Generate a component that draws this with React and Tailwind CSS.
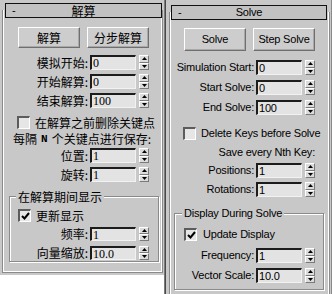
import React from 'react';

const cjk = "font-['Noto_Sans_CJK_SC',sans-serif]";
const sans = "font-['Liberation_Sans',Arial,sans-serif]";
const serifNum = "font-['Liberation_Serif','Noto_Sans_CJK_SC',serif]";

function TitleBar({ text, className, font }) {
  return (
    <div className={`relative z-10 grid grid-cols-[20px_1fr_20px] items-center border border-[#111] bg-[#c2c2c2] leading-none ${className}`}>
      <span className={`pl-[6px] text-[11px] ${sans}`}>-</span>
      <span className={`text-center ${font}`}>{text}</span>
      <span />
    </div>
  );
}

function Button({ children, className }) {
  return (
    <div className={`flex w-[62px] items-center justify-center border border-t-white border-l-white border-r-[#6f6f6f] border-b-[#6f6f6f] bg-[#cdcdcd] shadow-[inset_-1px_-1px_0_#a8a8a8] leading-none ${className}`}>
      {children}
    </div>
  );
}

function Spinner({ className }) {
  return (
    <div className={`ml-[3px] flex w-[10px] flex-col ${className}`}>
      <div className="flex flex-1 items-center justify-center border border-t-white border-l-white border-r-[#7a7a7a] border-b-[#7a7a7a] bg-[#dcdcdc]">
        <svg width="5" height="3" viewBox="0 0 5 3"><path d="M2.5 0L5 3H0z" fill="#000" /></svg>
      </div>
      <div className="flex flex-1 items-center justify-center border border-t-white border-l-white border-r-[#7a7a7a] border-b-[#7a7a7a] bg-[#dcdcdc]">
        <svg width="5" height="3" viewBox="0 0 5 3"><path d="M0 0H5L2.5 3z" fill="#000" /></svg>
      </div>
    </div>
  );
}

function Field({ value, className, font }) {
  return (
    <div className={`flex w-[46px] items-center overflow-hidden border-t-2 border-l-2 border-r border-b border-t-[#1c1c1c] border-l-[#1c1c1c] border-r-[#f2f2f2] border-b-[#f2f2f2] bg-[#e3e3e3] pl-[1px] leading-none ${font} ${className}`}>
      {value}
    </div>
  );
}

function Row({ label, value, labelW, h, labelFont, valueFont }) {
  return (
    <div className={`flex items-center ${h}`}>
      <span className={`pr-[2px] text-right leading-none whitespace-nowrap ${labelW} ${labelFont}`}>{label}</span>
      <Field value={value} className={h} font={valueFont} />
      <Spinner className={h} />
    </div>
  );
}

function Check({ checked }) {
  return (
    <div className="flex h-[13px] w-[13px] shrink-0 items-center justify-center border-t-2 border-l-2 border-r border-b border-t-[#5c5c5c] border-l-[#5c5c5c] border-r-white border-b-white bg-[#e6e6e6]">
      {checked && (
        <svg width="9" height="8" viewBox="0 0 9 8">
          <path d="M1 4L3.5 6.5L8 1" fill="none" stroke="#000" strokeWidth="2" />
        </svg>
      )}
    </div>
  );
}

function LeftPanel() {
  const num = `text-[12px] ${serifNum}`;
  const lab = `text-[12px] ${cjk}`;
  return (
    <div className="h-[275px] w-[164px] shrink-0 bg-[#c8c8c8] pt-[3px] text-black">
      <TitleBar text="解算" className="ml-[5px] mr-[2px] h-[15px]" font={`text-[12px] ${cjk}`} />
      <div className="-mt-[8px] ml-[2px] mr-[1px] h-[263px] border-x border-b border-[#8a8a8a] pt-[17px] shadow-[inset_1px_0_0_#fff,inset_-1px_-1px_0_#fff]">
        <div className="ml-[15px] flex gap-[7px]">
          <Button className={`h-[21px] text-[12px] ${cjk}`}>解算</Button>
          <Button className={`h-[21px] text-[12px] ${cjk}`}>分步解算</Button>
        </div>
        <div className="mt-[7px] flex flex-col gap-[4px]">
          <Row label="模拟开始:" value="0" labelW="w-[87px]" h="h-[15px]" labelFont={lab} valueFont={num} />
          <Row label="开始解算:" value="0" labelW="w-[87px]" h="h-[15px]" labelFont={lab} valueFont={num} />
          <Row label="结束解算:" value="100" labelW="w-[87px]" h="h-[15px]" labelFont={lab} valueFont={num} />
        </div>
        <div className="ml-[14px] mt-[8px] flex h-[13px] items-center gap-[5px]">
          <Check />
          <span className={`leading-none ${lab}`}>在解算之前删除关键点</span>
        </div>
        <div className={`ml-[10px] mt-[3px] flex h-[14px] items-center whitespace-nowrap leading-none ${lab}`}>
          每隔<span className="mx-[4px] font-['Liberation_Mono',monospace] text-[11px] font-bold">N</span>个关键点进行保存:
        </div>
        <div className="mt-[2px] flex flex-col gap-[4px]">
          <Row label="位置:" value="1" labelW="w-[87px]" h="h-[15px]" labelFont={lab} valueFont={num} />
          <Row label="旋转:" value="1" labelW="w-[87px]" h="h-[15px]" labelFont={lab} valueFont={num} />
        </div>
        <div className="relative ml-[6px] mt-[14px] w-[150px] border border-[#8a8a8a] pb-[1px] pt-[12px] shadow-[inset_1px_1px_0_#fff,1px_1px_0_#fff]">
          <span className={`absolute -top-[8px] left-[6px] bg-[#c8c8c8] px-[2px] leading-[15px] ${lab}`}>在解算期间显示</span>
          <div className="ml-[8px] flex h-[13px] items-center gap-[5px]">
            <Check checked />
            <span className={`leading-none ${lab}`}>更新显示</span>
          </div>
          <div className="mt-[5px] flex flex-col gap-[5px]">
            <Row label="频率:" value="1" labelW="w-[80px]" h="h-[14px]" labelFont={lab} valueFont={num} />
            <Row label="向量缩放:" value="10.0" labelW="w-[80px]" h="h-[14px]" labelFont={lab} valueFont={num} />
          </div>
        </div>
      </div>
    </div>
  );
}

function RightPanel() {
  const t = `text-[11px] tracking-[-0.2px] ${sans}`;
  return (
    <div className="h-[294px] w-[166px] shrink-0 overflow-hidden border-r border-r-[#8a8a8a] bg-[#c8c8c8] pt-[5px] text-black">
      <TitleBar text="Solve" className="ml-[5px] mr-[4px] h-[15px]" font={t} />
      <div className="-mt-[8px] ml-[3px] mr-[1px] h-[300px] border-x border-[#8a8a8a] pt-[16px] shadow-[inset_1px_0_0_#fff,inset_-1px_0_0_#fff]">
        <div className="ml-[14px] flex gap-[7px]">
          <Button className={`h-[23px] ${t}`}>Solve</Button>
          <Button className={`h-[23px] ${t}`}>Step Solve</Button>
        </div>
        <div className="mt-[9px] flex flex-col gap-[5px]">
          <Row label="Simulation Start:" value="0" labelW="w-[86px]" h="h-[15px]" labelFont={t} valueFont={t} />
          <Row label="Start Solve:" value="0" labelW="w-[86px]" h="h-[15px]" labelFont={t} valueFont={t} />
          <Row label="End Solve:" value="100" labelW="w-[86px]" h="h-[15px]" labelFont={t} valueFont={t} />
        </div>
        <div className="ml-[13px] mt-[12px] flex h-[13px] items-center gap-[5px]">
          <Check />
          <span className={`leading-none whitespace-nowrap ${t}`}>Delete Keys before Solve</span>
        </div>
        <div className={`mt-[5px] flex h-[15px] w-[145px] items-center justify-end leading-none ${t}`}>Save every Nth Key:</div>
        <div className="mt-[3px] flex flex-col gap-[4px]">
          <Row label="Positions:" value="1" labelW="w-[86px]" h="h-[15px]" labelFont={t} valueFont={t} />
          <Row label="Rotations:" value="1" labelW="w-[86px]" h="h-[15px]" labelFont={t} valueFont={t} />
        </div>
        <div className="relative ml-[4px] mt-[16px] w-[150px] border border-[#8a8a8a] pb-[6px] pt-[14px] shadow-[inset_1px_1px_0_#fff,1px_1px_0_#fff]">
          <span className={`absolute -top-[8px] left-[7px] bg-[#c8c8c8] px-[2px] leading-[15px] ${t}`}>Display During Solve</span>
          <div className="ml-[9px] flex h-[13px] items-center gap-[6px]">
            <Check checked />
            <span className={`leading-none ${t}`}>Update Display</span>
          </div>
          <div className="mt-[7px] flex flex-col gap-[5px]">
            <Row label="Frequency:" value="1" labelW="w-[81px]" h="h-[15px]" labelFont={t} valueFont={t} />
            <Row label="Vector Scale:" value="10.0" labelW="w-[81px]" h="h-[15px]" labelFont={t} valueFont={t} />
          </div>
        </div>
      </div>
    </div>
  );
}

export default function App() {
  return (
    <div className="flex h-[294px] w-[332px] overflow-hidden bg-white">
      <LeftPanel />
      <div className="h-full w-[2px] shrink-0 border-l border-r border-l-[#7c7c7c] border-r-[#4a4a4a]" />
      <RightPanel />
    </div>
  );
}
